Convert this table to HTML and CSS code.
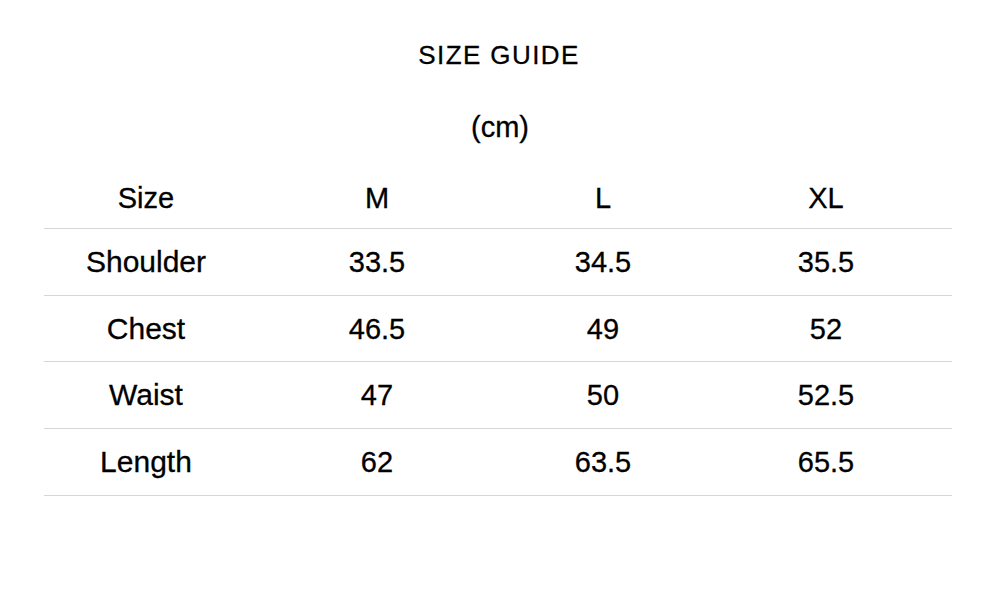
FILE: index.html
```html
<!DOCTYPE html>
<html lang="en">
<head>
<meta charset="utf-8">
<title>Size Guide</title>
<link rel="stylesheet" href="styles.css">
</head>
<body>
<main class="page">
  <h1 class="title">SIZE GUIDE</h1>
  <p class="unit">(cm)</p>
  <div class="table">
    <div class="row head">
      <div class="cell">Size</div>
      <div class="cell">M</div>
      <div class="cell">L</div>
      <div class="cell">XL</div>
    </div>
    <div class="row">
      <div class="cell label">Shoulder</div>
      <div class="cell">33.5</div>
      <div class="cell">34.5</div>
      <div class="cell">35.5</div>
    </div>
    <div class="row">
      <div class="cell label">Chest</div>
      <div class="cell">46.5</div>
      <div class="cell">49</div>
      <div class="cell">52</div>
    </div>
    <div class="row">
      <div class="cell label">Waist</div>
      <div class="cell">47</div>
      <div class="cell">50</div>
      <div class="cell">52.5</div>
    </div>
    <div class="row">
      <div class="cell label">Length</div>
      <div class="cell">62</div>
      <div class="cell">63.5</div>
      <div class="cell">65.5</div>
    </div>
  </div>
</main>
</body>
</html>
```

FILE: styles.css
```css
html, body {
  margin: 0;
  padding: 0;
  background: #ffffff;
}

body {
  font-family: "Liberation Sans", Arial, sans-serif;
  color: #000000;
  width: 1000px;
  height: 606px;
  overflow: hidden;
  -webkit-text-stroke: 0.3px #000000;
}

.page {
  padding: 35px 48px 0 44px;
  display: flex;
  flex-direction: column;
}

.title {
  margin: 0;
  font-size: 26px;
  font-weight: normal;
  letter-spacing: 1.4px;
  line-height: 40px;
  text-align: center;
  padding-left: 2px;
}

.unit {
  margin: 32px 0 0 0;
  font-size: 29px;
  line-height: 40px;
  text-align: center;
  padding-left: 4px;
}

.table {
  margin-top: 21px;
  width: 908px;
  display: flex;
  flex-direction: column;
}

.row {
  display: grid;
  grid-template-columns: 204px 258px 194px 252px;
  height: 65.7px;
  border-bottom: 1px solid #d6d6d6;
  align-items: center;
}

.row.head {
  height: 60px;
}

.cell {
  text-align: center;
  font-size: 29px;
  line-height: 32px;
}

.row .label {
  font-size: 30px;
}
```
